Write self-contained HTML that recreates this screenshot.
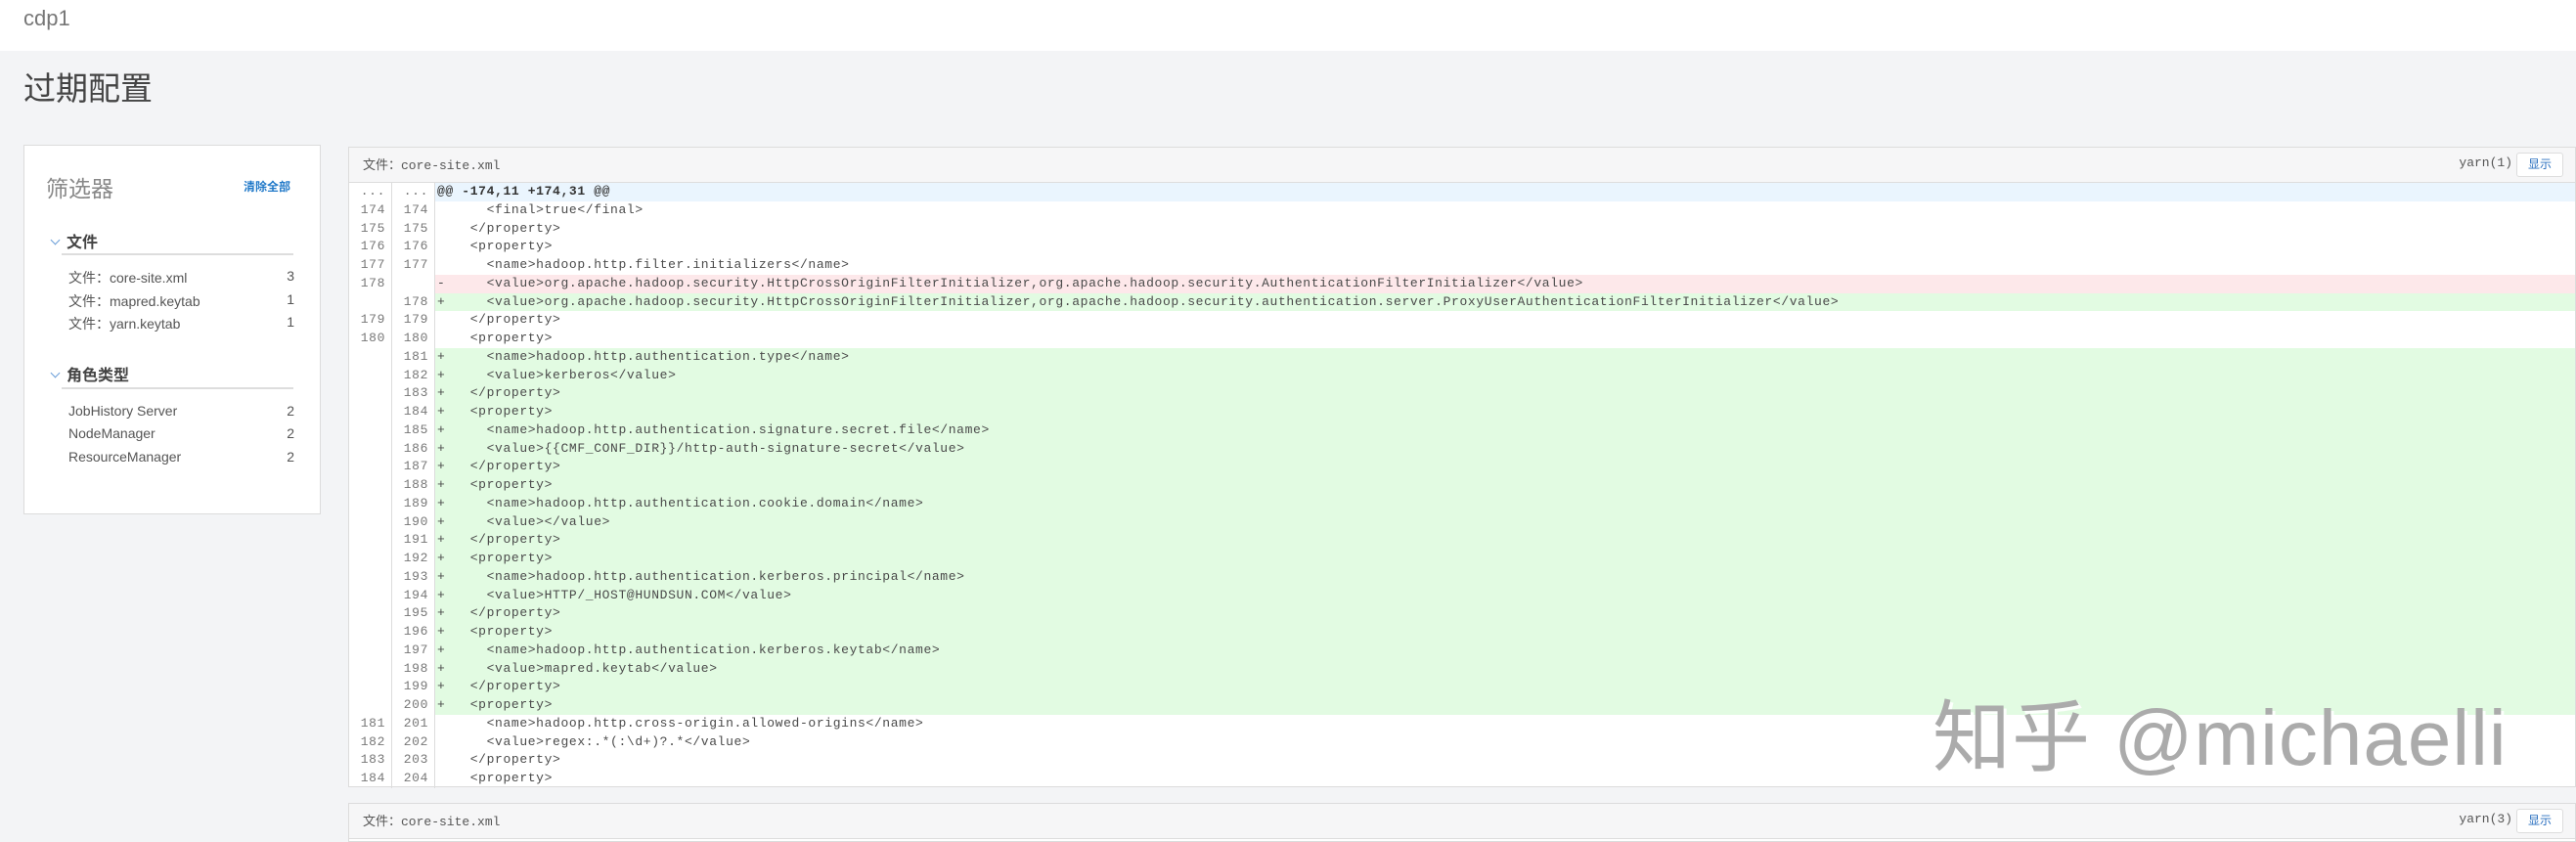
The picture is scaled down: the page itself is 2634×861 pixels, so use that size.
<!DOCTYPE html>
<html><head><meta charset="utf-8"><style>
*{margin:0;padding:0;box-sizing:border-box}
body{width:2634px;height:850px;overflow:hidden;background:#f3f4f6;font-family:"Liberation Sans","Noto Sans CJK SC",sans-serif;position:relative}
.top{position:absolute;left:0;top:0;width:2634px;height:52px;background:#fff}
.cdp{position:absolute;left:24px;top:6px;font-size:22px;color:#777}
.title{position:absolute;left:24px;top:64px;font-size:33px;color:#444}
.filter{position:absolute;left:24px;top:148px;width:304px;height:378px;background:#fff;border:1px solid #dcdcdc}
.ft{position:absolute;left:22px;top:25px;font-size:23px;color:#888}
.clr{position:absolute;left:224px;top:33px;font-size:12px;color:#1f78c8;font-weight:bold}
.sec{position:absolute;left:26px;font-size:16px;font-weight:bold;color:#444}
.sec:before{content:"";display:inline-block;width:6px;height:6px;border-left:1px solid #6a9ed8;border-bottom:1px solid #6a9ed8;transform:rotate(-45deg);margin:0 8px 4px 2px}
.ln{position:absolute;left:38px;width:237px;height:2px;background:#ddd}
.it{position:absolute;left:45px;width:231px;font-size:14px;color:#555;display:flex;justify-content:space-between}
.panel{position:absolute;left:356px;width:2278px;background:#fff;border:1px solid #dcdcdc}
.ph{height:36px;background:#f6f6f7;border-bottom:1px solid #ddd;position:relative;font-family:"Liberation Mono","Noto Sans CJK SC",monospace;font-size:13px;color:#555}
.ph .f{position:absolute;left:14px;top:7px}
.ph .y{position:absolute;right:64px;top:8px}
.ph .b{position:absolute;right:12px;top:5px;width:48px;height:25px;border:1px solid #ddd;border-radius:3px;background:#fff;color:#2a6fbf;font-size:12px;text-align:center;line-height:23px;font-family:"Liberation Sans","Noto Sans CJK SC",sans-serif}
.r{height:18.75px;display:flex;font-family:"Liberation Mono",monospace;font-size:13px;letter-spacing:.63px;line-height:18.75px;color:#4a4a4a;white-space:pre}
.n{width:44px;text-align:right;padding-right:6px;color:#777;border-right:1px solid #ddd;flex:none}
.c{flex:1;padding-left:2px}
.h .c{background:#eaf5fe;color:#333;font-weight:bold}
.d .c{background:#fde8ea}
.a .c{background:#e2fbe2}
.wm{position:absolute;left:1976px;top:690px;font-size:80px;color:#ababab;text-shadow:3px 3px 0 rgba(255,255,255,.9);letter-spacing:1px}
</style></head><body>
<div class="top"><div class="cdp">cdp1</div></div>
<div class="title">过期配置</div>
<div class="filter">
<div class="ft">筛选器</div><div class="clr">清除全部</div>
<div class="sec" style="top:85px">文件</div><div class="ln" style="top:110px"></div>
<div class="it" style="top:125px"><span>文件：core-site.xml</span><span>3</span></div>
<div class="it" style="top:149px"><span>文件：mapred.keytab</span><span>1</span></div>
<div class="it" style="top:172px"><span>文件：yarn.keytab</span><span>1</span></div>
<div class="sec" style="top:221px">角色类型</div><div class="ln" style="top:247px"></div>
<div class="it" style="top:263px"><span>JobHistory Server</span><span>2</span></div>
<div class="it" style="top:286px"><span>NodeManager</span><span>2</span></div>
<div class="it" style="top:310px"><span>ResourceManager</span><span>2</span></div>
</div>
<div class="panel" style="top:150px;height:655px">
<div class="ph"><span class="f">文件：core-site.xml</span><span class="y">yarn(1)</span><span class="b">显示</span></div>
<div class="r h"><span class="n">...</span><span class="n">...</span><span class="c">@@ -174,11 +174,31 @@</span></div>
<div class="r"><span class="n">174</span><span class="n">174</span><span class="c">      &lt;final&gt;true&lt;/final&gt;</span></div>
<div class="r"><span class="n">175</span><span class="n">175</span><span class="c">    &lt;/property&gt;</span></div>
<div class="r"><span class="n">176</span><span class="n">176</span><span class="c">    &lt;property&gt;</span></div>
<div class="r"><span class="n">177</span><span class="n">177</span><span class="c">      &lt;name&gt;hadoop.http.filter.initializers&lt;/name&gt;</span></div>
<div class="r d"><span class="n">178</span><span class="n"></span><span class="c">-     &lt;value&gt;org.apache.hadoop.security.HttpCrossOriginFilterInitializer,org.apache.hadoop.security.AuthenticationFilterInitializer&lt;/value&gt;</span></div>
<div class="r a"><span class="n"></span><span class="n">178</span><span class="c">+     &lt;value&gt;org.apache.hadoop.security.HttpCrossOriginFilterInitializer,org.apache.hadoop.security.authentication.server.ProxyUserAuthenticationFilterInitializer&lt;/value&gt;</span></div>
<div class="r"><span class="n">179</span><span class="n">179</span><span class="c">    &lt;/property&gt;</span></div>
<div class="r"><span class="n">180</span><span class="n">180</span><span class="c">    &lt;property&gt;</span></div>
<div class="r a"><span class="n"></span><span class="n">181</span><span class="c">+     &lt;name&gt;hadoop.http.authentication.type&lt;/name&gt;</span></div>
<div class="r a"><span class="n"></span><span class="n">182</span><span class="c">+     &lt;value&gt;kerberos&lt;/value&gt;</span></div>
<div class="r a"><span class="n"></span><span class="n">183</span><span class="c">+   &lt;/property&gt;</span></div>
<div class="r a"><span class="n"></span><span class="n">184</span><span class="c">+   &lt;property&gt;</span></div>
<div class="r a"><span class="n"></span><span class="n">185</span><span class="c">+     &lt;name&gt;hadoop.http.authentication.signature.secret.file&lt;/name&gt;</span></div>
<div class="r a"><span class="n"></span><span class="n">186</span><span class="c">+     &lt;value&gt;{{CMF_CONF_DIR}}/http-auth-signature-secret&lt;/value&gt;</span></div>
<div class="r a"><span class="n"></span><span class="n">187</span><span class="c">+   &lt;/property&gt;</span></div>
<div class="r a"><span class="n"></span><span class="n">188</span><span class="c">+   &lt;property&gt;</span></div>
<div class="r a"><span class="n"></span><span class="n">189</span><span class="c">+     &lt;name&gt;hadoop.http.authentication.cookie.domain&lt;/name&gt;</span></div>
<div class="r a"><span class="n"></span><span class="n">190</span><span class="c">+     &lt;value&gt;&lt;/value&gt;</span></div>
<div class="r a"><span class="n"></span><span class="n">191</span><span class="c">+   &lt;/property&gt;</span></div>
<div class="r a"><span class="n"></span><span class="n">192</span><span class="c">+   &lt;property&gt;</span></div>
<div class="r a"><span class="n"></span><span class="n">193</span><span class="c">+     &lt;name&gt;hadoop.http.authentication.kerberos.principal&lt;/name&gt;</span></div>
<div class="r a"><span class="n"></span><span class="n">194</span><span class="c">+     &lt;value&gt;HTTP/_HOST@HUNDSUN.COM&lt;/value&gt;</span></div>
<div class="r a"><span class="n"></span><span class="n">195</span><span class="c">+   &lt;/property&gt;</span></div>
<div class="r a"><span class="n"></span><span class="n">196</span><span class="c">+   &lt;property&gt;</span></div>
<div class="r a"><span class="n"></span><span class="n">197</span><span class="c">+     &lt;name&gt;hadoop.http.authentication.kerberos.keytab&lt;/name&gt;</span></div>
<div class="r a"><span class="n"></span><span class="n">198</span><span class="c">+     &lt;value&gt;mapred.keytab&lt;/value&gt;</span></div>
<div class="r a"><span class="n"></span><span class="n">199</span><span class="c">+   &lt;/property&gt;</span></div>
<div class="r a"><span class="n"></span><span class="n">200</span><span class="c">+   &lt;property&gt;</span></div>
<div class="r"><span class="n">181</span><span class="n">201</span><span class="c">      &lt;name&gt;hadoop.http.cross-origin.allowed-origins&lt;/name&gt;</span></div>
<div class="r"><span class="n">182</span><span class="n">202</span><span class="c">      &lt;value&gt;regex:.*(:\d+)?.*&lt;/value&gt;</span></div>
<div class="r"><span class="n">183</span><span class="n">203</span><span class="c">    &lt;/property&gt;</span></div>
<div class="r"><span class="n">184</span><span class="n">204</span><span class="c">    &lt;property&gt;</span></div>
</div>
<div class="panel" style="top:821px;height:40px">
<div class="ph"><span class="f">文件：core-site.xml</span><span class="y">yarn(3)</span><span class="b">显示</span></div>
</div>
<div class="wm">知乎 @michaelli</div>
</body></html>
